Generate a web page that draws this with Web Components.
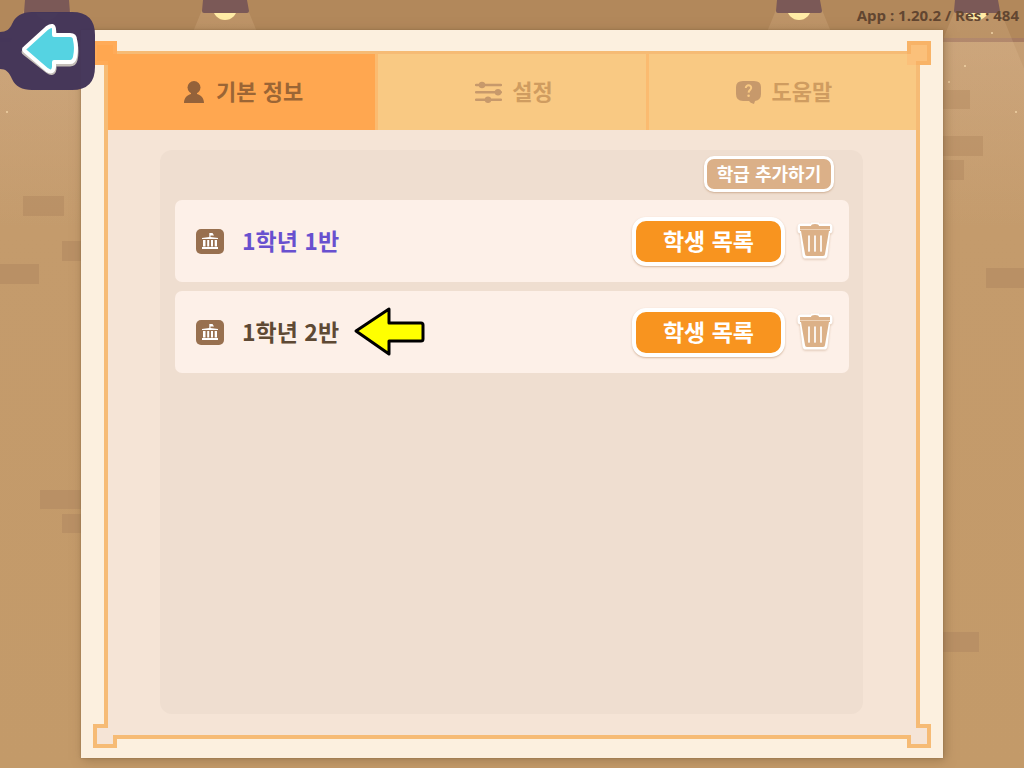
<!DOCTYPE html>
<html lang="ko">
<head>
<meta charset="utf-8">
<meta name="viewport" content="width=device-width, initial-scale=1">
<title>기본 정보</title>
<style>
  body { margin: 0; font-family: "Noto Sans CJK KR", "Noto Sans", sans-serif; }
</style>
</head>
<body>
<info-page>
  <version-label slot="top">App : 1.20.2 / Res : 484</version-label>
  <ornate-panel>
    <tab-strip slot="tabs" role="tablist">
      <tab-button active icon="person">기본 정보</tab-button>
      <tab-button icon="sliders">설정</tab-button>
      <tab-button icon="help">도움말</tab-button>
    </tab-strip>
    <class-list>
      <sticker-button slot="action" small>학급 추가하기</sticker-button>
      <class-row current>1학년 1반</class-row>
      <class-row>1학년 2반<pointer-arrow slot="marker"></pointer-arrow></class-row>
    </class-list>
  </ornate-panel>
</info-page>

<script>
function define(name, markup, setup) {
  const template = document.createElement('template');
  template.innerHTML = markup;
  customElements.define(name, class extends HTMLElement {
    connectedCallback() {
      if (this.shadowRoot) return;
      this.attachShadow({ mode: 'open' }).append(template.content.cloneNode(true));
      if (setup) setup(this);
    }
  });
}

const ICONS = {
  person: `<svg width="20" height="24" viewBox="0 0 20 24"><circle cx="10" cy="7.500" r="6.500"/><path d="M7 12h6v2c4 1 7 4 7 9H0c0-5 3-8 7-9z"/></svg>`,
  sliders: `<svg width="27" height="24" viewBox="0 0 27 24"><path d="M1 5H26M1 12.300H26M1 19.700H26" stroke="currentColor" stroke-width="2.400" stroke-linecap="round"/><circle cx="7" cy="5" r="3.200"/><circle cx="23" cy="12.300" r="3.200"/><circle cx="13" cy="19.700" r="3.200"/></svg>`,
  help: `<svg width="25" height="24" viewBox="0 0 25 24"><path d="M7 1H18Q25 1 25 7V14Q25 20 19 21L18 24Q14 23 13 21H7Q0 21 0 14V7Q0 1 7 1z"/><path d="M9.800 8C9.800 4.300 15.500 4.500 15.200 8C15 10 12.700 10.200 12.600 12.600" stroke="#f9c983" stroke-width="2" fill="none"/><circle cx="12.600" cy="15.700" r="1.300" fill="#f9c983"/></svg>`
};

define('room-scene', `
<style>:host{display:block} svg{display:block;width:100%;height:100%}</style>
<svg viewBox="0 0 1024 768" preserveAspectRatio="xMidYMin slice" aria-hidden="true">
  <defs>
    <linearGradient id="wall" x2="0" y2="1"><stop offset="0" stop-color="#c59e75"/><stop offset=".3" stop-color="#c49b6c"/><stop offset="1" stop-color="#c39a69"/></linearGradient>
    <linearGradient id="beam" x2="0" y2="1"><stop offset="0" stop-color="#ffdcb4" stop-opacity=".15"/><stop offset="1" stop-color="#ffdcb4" stop-opacity="0"/></linearGradient>
  </defs>
  <path fill="url(#wall)" d="M0 0H1024V768H0z"/>
  <path fill="#b2885b" d="M0 0H1024V38H0z"/>
  <path fill="#a77c62" d="M0 38H1024V42H0z"/>
  <g fill="#b99065">
    <path d="M23 196H64V216H23zM62 241H90V261H62zM0 264H39V284H0zM40 490H90V509H40zM62 514H90V533H62z"/>
    <path d="M940 90H970V109H940zM940 136H983V156H940zM940 160H964V180H940zM986 268H1024V288H986zM940 632H979V652H940z"/>
  </g>
  <g fill="url(#beam)">
    <path d="M24 10H70L160 230H-66zM202 10H248L338 230H112zM776 10H822L912 230H686zM955 10H1000L1090 230H865z"/>
  </g>
  <g fill="#ffeca6"><circle cx="47" cy="8" r="12"/><circle cx="225" cy="8" r="12"/><circle cx="799" cy="8" r="12"/><circle cx="977" cy="8" r="12"/></g>
  <path fill="#7b5957" d="M25 0H69L70 13H24zM203 0H247L249 11Q249 13 247 13H204Q202 13 202 11zM777 0H820L822 11Q822 13 820 13H778Q776 13 776 11zM955 0H998L1000 11Q1000 13 998 13H956Q954 13 954 11z"/>
  <g fill="#efd2a4"><circle cx="7" cy="112" r="1"/><circle cx="992" cy="33" r="1"/><circle cx="965" cy="66" r="1"/><circle cx="949" cy="82" r="1"/><circle cx="1016" cy="112" r="1"/></g>
</svg>`);

define('back-button', `
<style>
  :host{display:block}
  button{display:block;border:0;padding:0;background:none;cursor:pointer}
  svg{display:block}
</style>
<button type="button" aria-label="뒤로">
  <svg width="95" height="78" viewBox="0 0 95 78">
    <path fill="#433559" fill-opacity=".98" d="M0 20C6 20 10 17 12 12Q17 0 32 0H72Q95 0 95 23V55Q95 78 72 78H32Q17 78 12 67C9 60 6 57 0 57z"/>
    <path d="M25 39L48 18Q54 14 54 21V26H70Q75 26 75 31Q77 39 75 48Q74 52 70 52H54V57Q53 63 48 59L25 41Q23 40 25 39z" fill="#c4bdb7" stroke="#c4bdb7" stroke-width="5" stroke-linejoin="round"/>
    <path d="M25 36L47 16Q54 11 54 18V23H70Q75 23 75 28Q77 36 75 45Q74 50 70 50H54V55Q53 62 47 58L25 39Q23 37 25 36z" fill="#55d3e2" stroke="#fff" stroke-width="4" stroke-linejoin="round"/>
  </svg>
</button>`);

define('version-label', `
<style>:host{display:block;font:700 15px/20px "Open Sans","Noto Sans",sans-serif;color:#624631}</style><slot></slot>`);

define('info-page', `
<style>
  :host{display:flex;flex-direction:column;min-height:100vh;box-sizing:border-box;padding:0 81px 10px;position:relative;overflow:hidden}
  room-scene{position:absolute;inset:0}
  header{display:flex;justify-content:flex-end;align-items:center;height:30px;margin:0 -76px;box-sizing:border-box;position:relative}
  main{display:flex;flex:1;position:relative}
  back-button{position:absolute;left:0;top:12px}
</style>
<room-scene></room-scene>
<header><slot name="top"></slot></header>
<main><slot></slot></main>
<back-button></back-button>`);

define('ornate-panel', `
<style>
  :host{display:flex;flex:1;box-sizing:border-box;padding:21px 23px 19px;background:#fcf0df;box-shadow:0 0 2px #7e603d99,2px 2px 10px #7e603d88}
  .frame{display:flex;flex-direction:column;flex:1;position:relative;border:4px solid #f6bb75;border-top-width:3px;background:#f5e4d6}
  .body{display:flex;flex:1;padding:20px 53px 21px 52px}
  .corner{position:absolute;width:24px;height:24px;fill:#f5e4d6;stroke:#f6bb75}
  .corner path{stroke:none}
  .corner polyline{fill:none;stroke-width:4}
  .tl{left:-15px;top:-13px;transform:scaleY(-1);fill:#ffa750;stroke:#ffab58}
  .tr{right:-15px;top:-13px;transform:scale(-1);fill:#fbc07a;stroke:#f8b367}
  .bl{left:-15px;bottom:-13px}
  .br{right:-15px;bottom:-13px;transform:scaleX(-1)}
</style>
<div class="frame">
  <slot name="tabs"></slot>
  <div class="body"><slot></slot></div>
</div>`, el => {
  const frame = el.shadowRoot.querySelector('.frame');
  for (const side of ['tl', 'tr', 'bl', 'br']) {
    frame.insertAdjacentHTML('beforeend', `<svg class="corner ${side}" viewBox="0 0 24 24" aria-hidden="true"><path d="M0 0H24V24H0z"/><polyline points="15,2 2,2 2,22 22,22 22,11"/></svg>`);
  }
});

define('tab-strip', `
<style>:host{display:grid;grid-template-columns:repeat(3,1fr);gap:3px;height:76px;background:#fbbb70}</style><slot></slot>`);

define('tab-button', `
<style>
  :host{display:flex}
  button{flex:1;display:flex;align-items:center;justify-content:center;gap:10px;border:0;padding:0 0 0 4px;background:#f9c983;color:#cf9c60;font:700 22px/32px "Noto Sans CJK KR",sans-serif;cursor:pointer}
  .icon{display:flex;color:#c7996b}
  .label{padding-bottom:4px}
  svg{display:block;fill:currentColor}
  :host([active]) button{background:#ffa750;color:#9b6535;gap:12px}
  :host([active]) .icon{color:#94623a}
</style>
<button type="button" role="tab"><span class="icon"></span><span class="label"><slot></slot></span></button>`, el => {
  el.shadowRoot.querySelector('.icon').innerHTML = ICONS[el.getAttribute('icon')];
  el.shadowRoot.querySelector('button').setAttribute('aria-selected', el.hasAttribute('active'));
});

define('class-list', `
<style>
  :host{display:block;flex:1;box-sizing:border-box;padding:6px 14px 14px 15px;border-radius:12px;background:#efded0}
  .bar{display:flex;justify-content:flex-end;height:44px;padding-right:15px}
  .rows{display:flex;flex-direction:column;gap:9px}
</style>
<div class="bar"><slot name="action"></slot></div>
<div class="rows"><slot></slot></div>`);

define('sticker-button', `
<style>
  :host{display:block}
  button{display:block;box-sizing:border-box;width:153px;height:49px;border:4px solid #fff;border-radius:14px;padding:0 0 2px;background:#f8941f;color:#fff;font:700 23px/36px "Noto Sans CJK KR",sans-serif;box-shadow:0 1px 2px #b98e6999;cursor:pointer;white-space:nowrap}
  :host([small]) button{width:130px;height:36px;border-width:3px;border-radius:10px;background:#dbb088;font-size:18px;line-height:28px}
</style>
<button type="button"><slot></slot></button>`);

define('trash-button', `
<style>:host{display:block} button{display:block;border:0;padding:0;background:none;cursor:pointer} svg{display:block;filter:drop-shadow(0 1px 1px #b98e6977)}</style>
<button type="button" aria-label="삭제">
  <svg width="38" height="42" viewBox="0 0 38 42">
    <g fill="#fff" stroke="#fff" stroke-width="7" stroke-linejoin="round"><path d="M5 7H33V10H5zM7 10H31L28 35H10z"/><path d="M15 6H23"/></g>
    <g fill="#dcb188"><path d="M4 6H15Q15 4 19 4Q23 4 23 6H34V9H4z"/><path d="M4 10H34V11H33L29 34Q29 36 27 36H11Q9 36 9 34L5 11H4z"/></g>
    <path fill="#eed3b8" d="M4 9H34V10H4z"/>
    <path d="M13 16V31M19 16V31M25 16V31" stroke="#fff" stroke-width="1.700" stroke-linecap="round"/>
  </svg>
</button>`);

define('school-icon', `
<style>:host{display:block} svg{display:block}</style>
<svg width="28" height="25" viewBox="0 0 28 25" aria-hidden="true">
  <rect width="28" height="25" rx="5" fill="#98704f"/>
  <path fill="#fff" d="M13.300 4H16.500L18 6.500H14.500V8L22 9V10H6V9L13.300 8zM6 18H22V20H6z"/>
  <path fill="#fff" d="M7 11H9.500V17.500H7zM11.200 11H13.200V17.500H11.200zM15 11H17V17.500H15zM18.700 11H21V17.500H18.700z"/>
</svg>`);

define('pointer-arrow', `
<style>:host{display:block} svg{display:block}</style>
<svg width="72" height="52" viewBox="0 0 72 52" aria-hidden="true">
  <path d="M2 25L35 3V17H67Q69 17 69 19V33Q69 35 67 35H35V48z" fill="#ff0" stroke="#000" stroke-width="3" stroke-linejoin="round"/>
</svg>`);

define('class-row', `
<style>
  :host{display:flex;align-items:center;height:82px;box-sizing:border-box;padding:0 15px 0 21px;border-radius:7px;background:#fdf0e8;color:#5e4934}
  :host([current]){color:#6850cf}
  .name{margin-left:18px;padding-bottom:2px;font:700 23px/36px "Noto Sans CJK KR",sans-serif;white-space:nowrap}
  .marker{flex:1;padding-left:15px}
  .actions{display:flex;align-items:center;gap:11px}
</style>
<school-icon></school-icon>
<span class="name"><slot></slot></span>
<div class="marker"><slot name="marker"></slot></div>
<div class="actions"><sticker-button>학생 목록</sticker-button><trash-button></trash-button></div>`);
</script>
</body>
</html>
